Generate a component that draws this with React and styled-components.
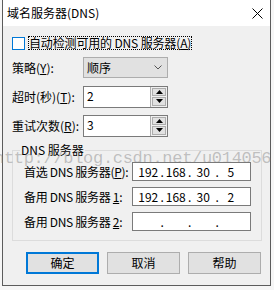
import React from "react";
import styled, { createGlobalStyle } from "styled-components";

const Global = createGlobalStyle`
  html, body { margin: 0; padding: 0; background: #f6f6f6; }
  body { font-family: "Noto Sans CJK SC", "Noto Sans", sans-serif; font-size: 12px; color: #000; }
  * { box-sizing: border-box; }
`;

const Stage = styled.div`
  position: relative;
  width: 274px;
  height: 290px;
  overflow: hidden;
`;

const Window = styled.div`
  margin-left: 2px;
  width: 269px;
  height: 286px;
  border: 1px solid #5c5c5c;
  border-top: none;
  display: flex;
  flex-direction: column;
  background: #f0f0f0;
`;

const TitleBar = styled.div`
  height: 26px;
  background: #fff;
  display: flex;
  align-items: center;
  justify-content: space-between;
  padding: 0 7px 0 4px;
  font-size: 12px;
  line-height: 14px;
`;

const Body = styled.div`
  flex: 1;
  padding: 10px 0 0 9px;
  display: flex;
  flex-direction: column;
  white-space: nowrap;
`;

const CheckRow = styled.div`
  display: flex;
  align-items: center;
  height: 14px;
  gap: 3px;
`;

const CheckBox = styled.span`
  width: 13px;
  height: 13px;
  border: 1px solid #0078d7;
  background: #fff;
`;

const FocusLabel = styled.span`
  outline: 1px dotted #000;
  outline-offset: -1px;
  padding: 0 1px;
  line-height: 14px;
  letter-spacing: -0.15px;
`;

const FieldRow = styled.div`
  display: flex;
  align-items: center;
  height: 21px;
  margin-top: ${(p) => p.$mt}px;
`;

const FieldLabel = styled.span`
  width: 71px;
  line-height: 14px;
`;

const Select = styled.div`
  width: 85px;
  height: 21px;
  background: #e1e1e1;
  border: 1px solid #adadad;
  display: flex;
  align-items: center;
  justify-content: space-between;
  padding: 0 5px 0 3px;
  line-height: 14px;
`;

const SpinBox = styled.div`
  width: 85px;
  height: 22px;
  border: 1px solid #7a7a7a;
  background: #fff;
  display: flex;
`;

const SpinText = styled.span`
  flex: 1;
  padding: 2px 0 0 3px;
  line-height: 14px;
`;

const SpinButtons = styled.div`
  width: 17px;
  border-left: 1px solid #adadad;
  background: #f0f0f0;
  display: flex;
  flex-direction: column;
  gap: 1px;
  padding: 1px;
`;

const SpinBtn = styled.div`
  flex: 1;
  border: 1px solid #adadad;
  background: #e1e1e1;
  display: flex;
  align-items: center;
  justify-content: center;
`;

const Group = styled.fieldset`
  margin: 7px 0 0 0;
  width: 250px;
  padding: 5px 10px 9px 11px;
  border: 1px solid #dcdcdc;
  display: flex;
  flex-direction: column;
  gap: 6px;
`;

const Legend = styled.legend`
  padding: 0 1px;
  margin-left: -4px;
  line-height: 14px;
`;

const IpRow = styled.div`
  display: flex;
  align-items: center;
  height: 19px;
`;

const IpLabel = styled.span`
  width: 108px;
  line-height: 14px;
  letter-spacing: -0.3px;
`;

const IpBox = styled.div`
  width: 119px;
  height: 19px;
  border: 1px solid #7a7a7a;
  background: #fff;
  display: flex;
  align-items: center;
  padding-left: 3px;
  line-height: 14px;
`;

const IpSeg = styled.span`
  width: 24.5px;
  text-align: center;
`;

const IpDot = styled.span`
  width: 3px;
  text-align: center;
`;

const ButtonRow = styled.div`
  display: flex;
  gap: 8px;
  margin: 11px 0 0 14px;
`;

const Button = styled.div`
  width: 73px;
  height: 22px;
  display: flex;
  align-items: center;
  justify-content: center;
  background: #e1e1e1;
  border: ${(p) => (p.$default ? "2px solid #0078d7" : "1px solid #adadad")};
  font-size: 12px;
  line-height: 14px;
`;

const Watermark = styled.div`
  position: absolute;
  left: -6px;
  top: 149px;
  font-family: "Liberation Mono", monospace;
  font-size: 17px;
  letter-spacing: -0.3px;
  line-height: 20px;
  color: rgba(120, 120, 120, 0.42);
  white-space: nowrap;
  pointer-events: none;
`;

const Up = () => (
  <svg width="7" height="4" viewBox="0 0 7 4"><path d="M3.5 0L7 4H0z" fill="#000" /></svg>
);
const Down = () => (
  <svg width="7" height="4" viewBox="0 0 7 4"><path d="M0 0H7L3.5 4z" fill="#000" /></svg>
);

const Spin = ({ value }) => (
  <SpinBox>
    <SpinText>{value}</SpinText>
    <SpinButtons>
      <SpinBtn><Up /></SpinBtn>
      <SpinBtn><Down /></SpinBtn>
    </SpinButtons>
  </SpinBox>
);

const Ip = ({ parts }) => (
  <IpBox>
    <IpSeg>{parts[0]}</IpSeg>
    <IpDot>.</IpDot>
    <IpSeg>{parts[1]}</IpSeg>
    <IpDot>.</IpDot>
    <IpSeg>{parts[2]}</IpSeg>
    <IpDot>.</IpDot>
    <IpSeg>{parts[3]}</IpSeg>
  </IpBox>
);

export default function App() {
  return (
    <Stage>
      <Global />
      <Window>
        <TitleBar>
          <span>域名服务器(DNS)</span>
          <svg width="11" height="11" viewBox="0 0 11 11">
            <path d="M0.5 0.5L10.5 10.5M10.5 0.5L0.5 10.5" stroke="#000" strokeWidth="1" />
          </svg>
        </TitleBar>
        <Body>
          <CheckRow>
            <CheckBox />
            <FocusLabel>自动检测可用的 DNS 服务器(<u>A</u>)</FocusLabel>
          </CheckRow>
          <FieldRow $mt={7}>
            <FieldLabel>策略(<u>Y</u>):</FieldLabel>
            <Select>
              <span>顺序</span>
              <svg width="8" height="5" viewBox="0 0 8 5">
                <path d="M0.5 0.5L4 4L7.5 0.5" stroke="#555" fill="none" strokeWidth="1" />
              </svg>
            </Select>
          </FieldRow>
          <FieldRow $mt={8}>
            <FieldLabel>超时(秒)(<u>T</u>):</FieldLabel>
            <Spin value="2" />
          </FieldRow>
          <FieldRow $mt={8}>
            <FieldLabel>重试次数(<u>R</u>):</FieldLabel>
            <Spin value="3" />
          </FieldRow>
          <Group>
            <Legend>DNS 服务器</Legend>
            <IpRow>
              <IpLabel>首选 DNS 服务器(<u>P</u>):</IpLabel>
              <Ip parts={["192", "168", "30", "5"]} />
            </IpRow>
            <IpRow>
              <IpLabel>备用 DNS 服务器 <u>1</u>:</IpLabel>
              <Ip parts={["192", "168", "30", "2"]} />
            </IpRow>
            <IpRow>
              <IpLabel>备用 DNS 服务器 <u>2</u>:</IpLabel>
              <Ip parts={["", "", "", ""]} />
            </IpRow>
          </Group>
          <ButtonRow>
            <Button $default>确定</Button>
            <Button>取消</Button>
            <Button>帮助</Button>
          </ButtonRow>
        </Body>
      </Window>
      <Watermark>http://blog.csdn.net/u014056</Watermark>
    </Stage>
  );
}
